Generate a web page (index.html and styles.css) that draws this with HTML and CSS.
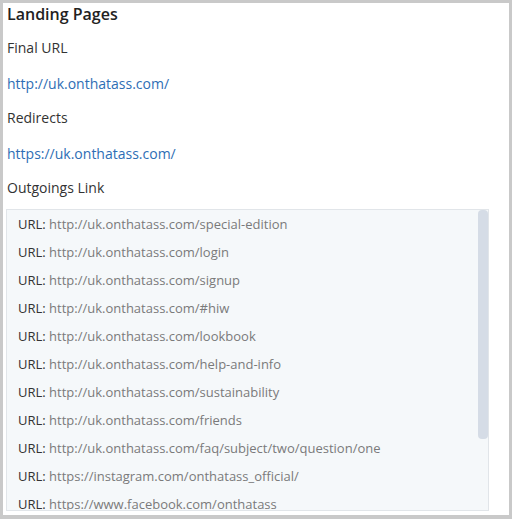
FILE: index.html
```html
<!DOCTYPE html>
<html>
<head>
<meta charset="utf-8">
<link rel="stylesheet" href="styles.css">
</head>
<body>
<div class="frame">
  <h1 class="title">Landing Pages</h1>
  <div class="field">
    <div class="label">Final URL</div>
    <a class="link" href="#">http://uk.onthatass.com/</a>
  </div>
  <div class="field">
    <div class="label">Redirects</div>
    <a class="link" href="#">https://uk.onthatass.com/</a>
  </div>
  <div class="field">
    <div class="label">Outgoings Link</div>
  </div>
  <div class="box">
    <ul class="list">
      <li><span class="k">URL:</span> <span class="v">http://uk.onthatass.com/special-edition</span></li>
      <li><span class="k">URL:</span> <span class="v">http://uk.onthatass.com/login</span></li>
      <li><span class="k">URL:</span> <span class="v">http://uk.onthatass.com/signup</span></li>
      <li><span class="k">URL:</span> <span class="v">http://uk.onthatass.com/#hiw</span></li>
      <li><span class="k">URL:</span> <span class="v">http://uk.onthatass.com/lookbook</span></li>
      <li><span class="k">URL:</span> <span class="v">http://uk.onthatass.com/help-and-info</span></li>
      <li><span class="k">URL:</span> <span class="v">http://uk.onthatass.com/sustainability</span></li>
      <li><span class="k">URL:</span> <span class="v">http://uk.onthatass.com/friends</span></li>
      <li><span class="k">URL:</span> <span class="v">http://uk.onthatass.com/faq/subject/two/question/one</span></li>
      <li><span class="k">URL:</span> <span class="v">https://instagram.com/onthatass_official/</span></li>
      <li><span class="k">URL:</span> <span class="v">https://www.facebook.com/onthatass</span></li>
    </ul>
    <div class="thumb"></div>
  </div>
</div>
</body>
</html>
```

FILE: styles.css
```css
* { box-sizing: border-box; }
html, body { margin: 0; padding: 0; background: #fff; }
body {
  font-family: "Open Sans", "Liberation Sans", sans-serif;
  font-size: 14px;
  color: #333;
}
.frame {
  width: 512px;
  height: 519px;
  border-style: solid;
  border-color: #c9c9c9;
  border-width: 3px 3px 4px 3px;
  padding: 0 0 0 3px;
  overflow: hidden;
}
.title {
  margin: 0;
  font-size: 16px;
  font-weight: 600;
  color: #222;
  line-height: 22px;
  height: 21px;
  padding-left: 1px;
}
.field { display: flex; flex-direction: column; }
.label {
  line-height: 20px;
  margin-top: 14px;
  margin-left: 1px;
  color: #333;
}
.link {
  line-height: 20px;
  margin-top: 16px;
  margin-left: 1px;
  color: #2e6eb5;
  text-decoration: none;
}
.box {
  position: relative;
  margin-top: 11px;
  width: 483px;
  height: 302px;
  background: #f5f8fa;
  border: 1px solid #e1e5e9;
  overflow: hidden;
}
.list {
  list-style: none;
  margin: 0;
  padding: 4px 0 0 11px;
  font-size: 13px;
}
.list li {
  line-height: 20px;
  height: 28px;
  white-space: nowrap;
}
.k { color: #333; }
.v { color: #7a7a7a; }
.thumb {
  position: absolute;
  top: 0;
  right: 0;
  width: 10px;
  height: 229px;
  background: #d5dce6;
  border-radius: 4px;
}
```
